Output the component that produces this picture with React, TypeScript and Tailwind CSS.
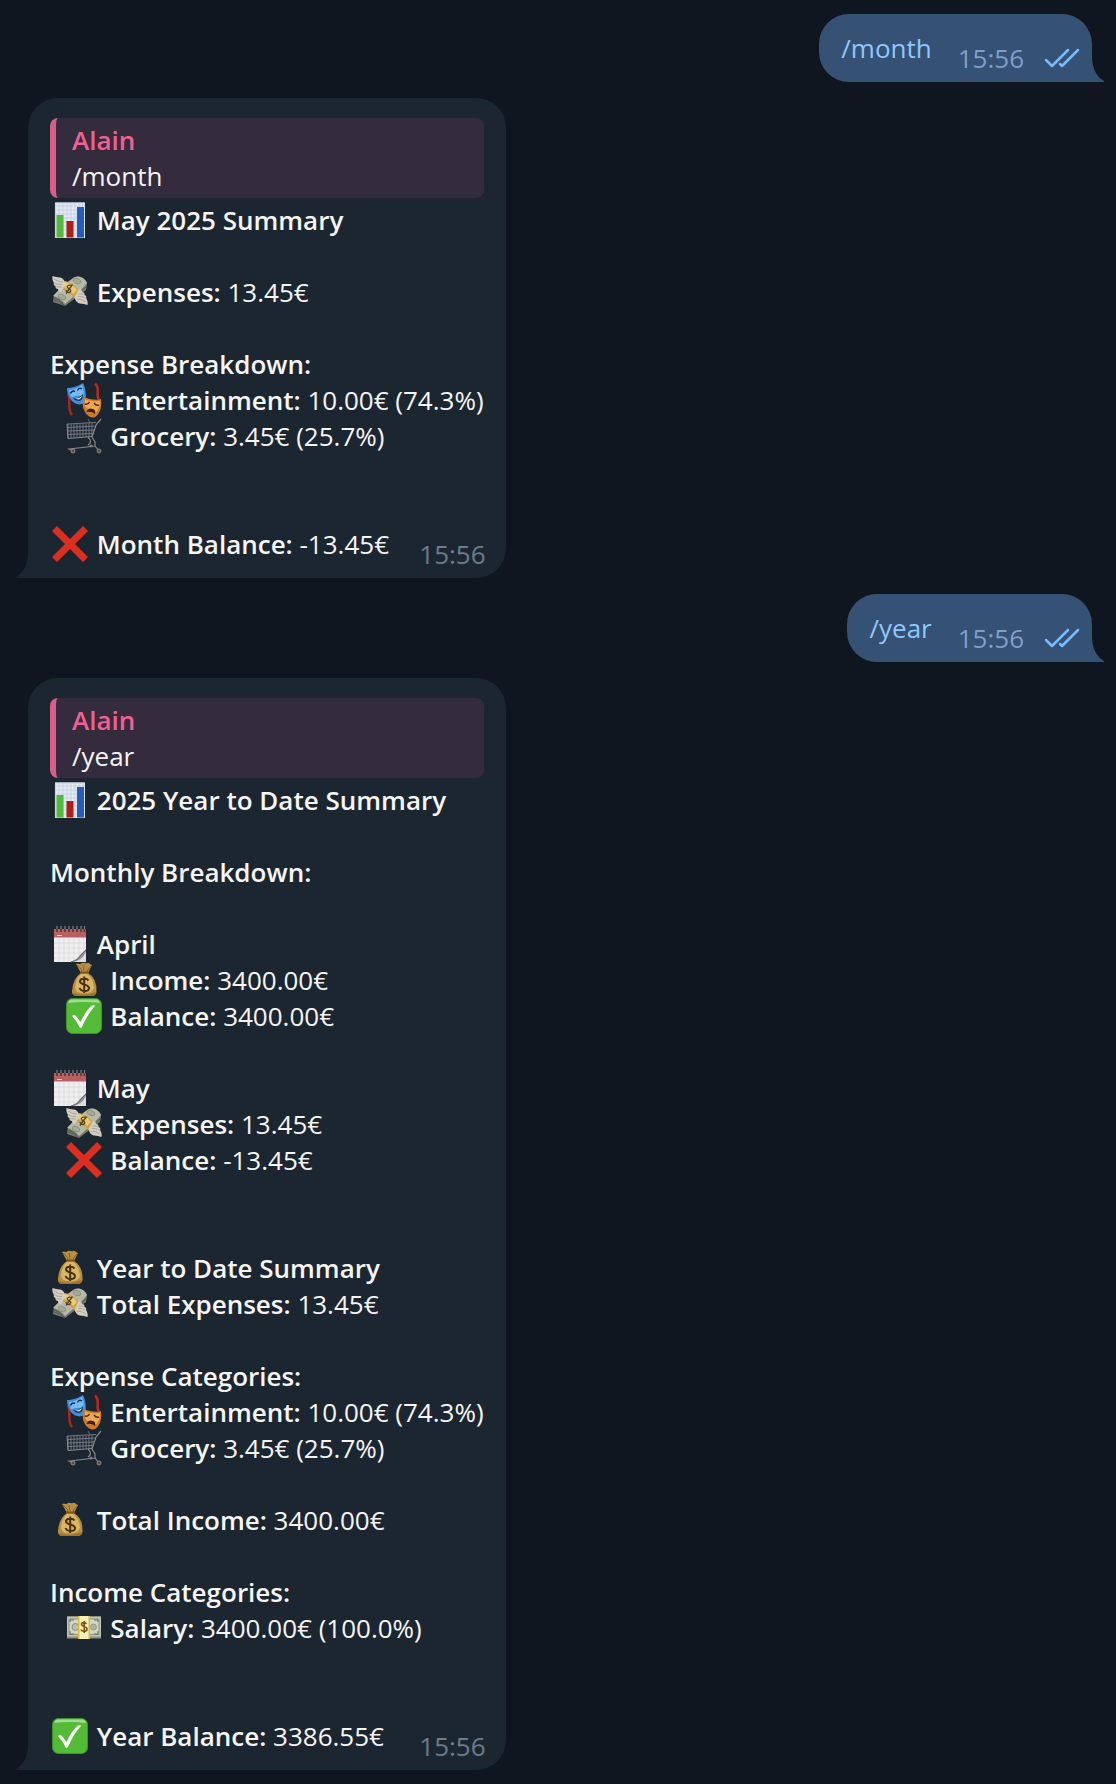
import type { ReactNode } from "react";

function Emoji({ label, children }: { label: string; children: ReactNode }) {
  return (
    <svg role="img" aria-label={label} viewBox="0 0 36 36" className="mx-0.5 inline-block h-9 w-9 overflow-visible align-top">
      {children}
    </svg>
  );
}

function Chart() {
  return (
    <Emoji label="Bar chart">
      <rect x="3" y="0.5" width="30" height="35.5" fill="#e3eaf3" />
      <path d="M7 .5V36M11 .5V36M15 .5V36M19 .5V36M23 .5V36M27 .5V36M31 .5V36M3 4H33M3 8H33M3 12H33M3 16H33M3 20H33M3 24H33M3 28H33M3 32H33" stroke="#bccbdd" strokeWidth=".7" />
      <path d="M3.4 36V.9H32.6" fill="none" stroke="#c5ccd3" strokeWidth=".8" />
      <rect x="4.5" y="13" width="7" height="22.5" fill="#55b83e" />
      <rect x="14.5" y="19" width="7" height="16.5" fill="#a92019" />
      <rect x="25" y="5" width="7" height="30.5" fill="#265bb7" />
    </Emoji>
  );
}

function Wing() {
  return (
    <>
      <path d="M.5 1C3 2 5 2 8 2.500 11 3 13 6 13.500 9L9 17C7 17 6 15.500 6 14 4 14 3 12.500 3.500 11 2 10.500 1 9 2 8 .5 6 0 3 .5 1Z" fill="#d3cec1" />
      <path d="M2 4Q6 7 11 7M2.500 8Q6 10 10 9.500M4.500 11.500Q7 12.500 9.500 12" fill="none" stroke="#a29d92" strokeWidth=".8" />
    </>
  );
}

function WingedMoney() {
  return (
    <Emoji label="Money with wings">
      <g transform="translate(0 2)">
        <path d="M11 9 22 1.500C27 -1 33 3 35 8L34 14 13 30 1 26 2 19Z" fill="#777b6c" />
        <path d="M12 9 22 1.500C27 -1 33 2 35 7L29 14 13 28C10 24 6 21 1 20Z" fill="#b7b9a8" />
        <path d="M2 22Q8 23 13 30M2 24Q8 25 12 30M22 21 34 11" fill="none" stroke="#4f5449" strokeWidth=".8" />
        <ellipse cx="25" cy="5" rx="4" ry="2.500" transform="rotate(25 25 5)" fill="#a3aa95" stroke="#7d846f" strokeWidth=".6" />
        <ellipse cx="10" cy="21" rx="4" ry="2.500" transform="rotate(25 10 21)" fill="#a3aa95" stroke="#7d846f" strokeWidth=".6" />
        <path d="M13 5C18 6 23 9 26 13V19L22 22C19 18 14 14 9 13V9Z" fill="#d3a33f" />
        <path d="M13 6C18 7 22 10 25 14L21 18C18 14 14 11 9 10Z" fill="#e6cb7c" />
        <path d="M20 10C17 8 14 10 16 12S20 14 18 16 14 15 14 14M20.500 8.500 14 17.500" fill="none" stroke="#5b431e" strokeWidth="1.300" />
        <g transform="translate(0 -1)"><Wing /></g>
        <g transform="translate(36 30) rotate(180)"><Wing /></g>
      </g>
    </Emoji>
  );
}

function Masks() {
  return (
    <Emoji label="Performing arts">
      <path d="M2 11C5 18 1 27 6 33" fill="none" stroke="#a5281c" strokeWidth="2.500" />
      <path d="M29 1.500C35 7 29 12 33 18" fill="none" stroke="#b52c1c" strokeWidth="2.500" />
      <path d="M1 6C5 6 13 4 17 1 20 7 21 17 18 21 14 24 8 22 5 18 2 14 1 10 1 6Z" fill="#3e8fdd" />
      <path d="M3 8C8 8 13 5 16 3 18 8 18 12 17 15 12 12 7 15 5 15Z" fill="#75bcf2" />
      <path d="M4.500 11.500Q6 8 9 9.500M11.500 8.500Q13 5 16 7" fill="none" stroke="#102d58" strokeWidth="1.500" />
      <path d="M7 16Q13 17 17 12 17 19 13 19 9 19 7 16Z" fill="#17365f" />
      <path d="M8.500 16.500Q13 17 16 14 15 17 13 17.500Z" fill="#e3f2fa" />
      <path d="M18 15C22 17 31 19 35 17 36 25 34 32 29 35 25 37 20 33 18 28 16 24 17 19 18 15Z" fill="#cc7a2c" />
      <path d="M19 17C23 19 30 20 34 19 34 25 32 29 29 31 24 29 21 27 19 24Z" fill="#eda950" />
      <path d="M19 22Q22 23 23.500 20M28 21Q30 24 33 23" fill="none" stroke="#54280c" strokeWidth="1.500" />
      <path d="M20.500 30Q22 25 27 27 30 28 29 32 26 29 20.500 30Z" fill="#471b11" />
    </Emoji>
  );
}

function Cart() {
  return (
    <Emoji label="Shopping cart">
      <g fill="none" stroke="#858990" strokeWidth=".8">
        <path d="M1 6 30 4.500M1.500 9.500 29 8M2 13 28 12M2 16.500 27 15.500M2 6V20M5 6V20M8 6V20M11 6V19.500M14 6V19.500M17 5.500V19M20 5.500V19M23 5V19M26 5V18" />
        <path d="M1 6 2 20.500 26 18.500" strokeWidth="1" />
      </g>
      <path d="M35 1 30 7 26 19 29 24 29 28 3 31 7 33M22 19Q27 24 22 27M29 28 33 33" fill="none" stroke="#8c858a" strokeWidth="1.200" />
      <path d="M22 1 24 5" stroke="#626a72" />
      <g fill="#4f4c4e" stroke="#a19a9b" strokeWidth=".8">
        <circle cx="7" cy="33" r="2" />
        <circle cx="33" cy="33" r="2" />
        <circle cx="25" cy="28" r="1" />
      </g>
    </Emoji>
  );
}

function Cross() {
  return (
    <Emoji label="Cross mark">
      <path d="M5 0 18 13 31 0 36 5 23 18 36 31 31 36 18 23 5 36 0 31 13 18 0 5Z" fill="#dc2f20" />
    </Emoji>
  );
}

function Check() {
  return (
    <Emoji label="Check mark">
      <rect x=".5" y=".5" width="35" height="35" rx="6" fill="#54bb37" stroke="#3d942a" />
      <path d="M5 1.500H31Q33.500 2 34 5 18 3 2 5 2.500 2 5 1.500Z" fill="#a0dc91" />
      <path d="M6 18Q8 16.500 10 18L14.500 24Q20 12 26 7.500 28 6.500 29 8 22 15 16 29 14.500 31 13.500 29 10 22 6 18Z" fill="#fff" />
    </Emoji>
  );
}

function Calendar() {
  return (
    <Emoji label="Calendar">
      <rect x="2" y="3" width="32" height="33" fill="#efefef" />
      <rect x="2" y="3" width="32" height="8.500" fill="#b8605f" />
      <path d="M7 12V36M12 12V36M17 12V36M22 12V36M27 12V36M32 12V24M2 17H34M2 22H34M2 27H34M2 32H34" stroke="#d9d9dc" strokeWidth=".8" />
      <path d="M5 9.500H10" stroke="#e7c5c5" />
      <path d="M34 23 34 36H18C24 34 26 32 27 30Q29 28 34 23Z" fill="#939496" />
      <path d="M34 26V36H20Q30 35 34 26Z" fill="#dedee0" />
      <path d="M19 36Q27 34 29 29 31 27 34 24" fill="none" stroke="#66686b" strokeWidth="1" />
      <path d="M5 0V6M9 0V6M13 0V6M17 0V6M21 0V6M25 0V6M29 0V6M32.500 0V6" stroke="#4a3b3e" strokeWidth="1.600" />
      <path d="M5 0V3M9 0V3M13 0V3M17 0V3M21 0V3M25 0V3M29 0V3M32.500 0V3" stroke="#8a8e92" strokeWidth=".8" />
    </Emoji>
  );
}

function MoneyBag() {
  return (
    <Emoji label="Money bag">
      <path d="M10 2C12 1 14 3 16 1 18 0 19 2 21 1 23 0 24 3 26 3L22 11Q31 16 30.500 30 30 34 25 34H11Q5.500 34 6 29 7 16 15 11Z" fill="#b98e42" />
      <path d="M15 12Q10 16 9 26 10 31 17 31 26 32 28 26 27 16 21 12Z" fill="#d9b764" />
      <path d="M11 3 16 8 15 11M25 4 21 9 22 11M17 3 18 9" fill="none" stroke="#8a632b" strokeWidth="1" />
      <path d="M14 10.500H23" stroke="#7d521f" strokeWidth="2" />
      <path d="M7 31Q18 35 30 30 30 34 25 34H11Q7 34 7 31Z" fill="#9b7130" />
      <path d="M22.500 18.500C21 16 14 16 14 19.500S23 22 23 26 15 30 13.500 26M18.200 14.500V31" fill="none" stroke="#49320f" strokeWidth="2" />
    </Emoji>
  );
}

function Banknote() {
  return (
    <Emoji label="Banknote">
      <rect x="1" y="6.500" width="34" height="22" fill="#8f9181" />
      <rect x="1" y="6.500" width="34" height="20" fill="#c3c4b2" />
      <rect x="3" y="9" width="30" height="15.500" fill="#d4d5c6" stroke="#85896f" strokeWidth=".8" />
      <path d="M4 12V10H8M28 10H32V12M4 21V24H8M28 24H32V21" fill="none" stroke="#666d57" />
      <circle cx="9.500" cy="17" r="3.500" fill="#bbc0aa" stroke="#7d8570" strokeWidth=".8" />
      <circle cx="27.500" cy="17" r="3" fill="#a6b89a" stroke="#7d8570" strokeWidth=".6" />
      <rect x="12" y="6" width="12" height="23" fill="#e3b93c" />
      <rect x="13.500" y="6" width="9" height="23" fill="#f9efbd" />
      <path d="M20.500 14C19.500 12 15.500 12 15.500 14.500S21 16 21 19 16 22 15 19.500M18.200 11V23" fill="none" stroke="#7a5a18" strokeWidth="1.700" />
    </Emoji>
  );
}

function Outgoing({ command }: { command: string }) {
  return (
    <article className="relative flex h-17 self-end rounded-[30px] rounded-br-none bg-[#355174] pt-4 pr-3 pl-5.5">
      <a href={"#" + command.slice(1)} className="text-[#8fc7ff]">{command}</a>
      <time className="mt-2.5 ml-6.5 text-[#7f9fc9]">15:56</time>
      <svg role="img" aria-label="Read" viewBox="0 0 36 20" className="mt-4.5 ml-5 h-5 w-9" fill="none" stroke="#78bcff" strokeWidth="2.500" strokeLinecap="round" strokeLinejoin="round">
        <path d="M2 12 8 18 24 2M16 16 18 18 34 2" />
      </svg>
      <svg aria-hidden="true" viewBox="0 0 12 26" className="absolute bottom-0 left-full h-6.5 w-3">
        <path d="M0 0Q0 18 12 25V26H0Z" fill="#355174" />
      </svg>
    </article>
  );
}

function Incoming({ command, children }: { command: string; children: ReactNode }) {
  return (
    <article className="relative self-start rounded-[30px] rounded-bl-none bg-[#1c2631] px-5.5 pt-5 pb-4 text-[#f5f5f5]">
      <blockquote className="mb-1 rounded-lg border-l-6 border-[#d75f8c] bg-[#342b3c] px-4 py-1">
        <p className="font-semibold text-[#ef6193]">Alain</p>
        <p>{command}</p>
      </blockquote>
      <div className="whitespace-pre">{children}</div>
      <time className="absolute right-5 bottom-1.5 text-[#6d7c8c]">15:56</time>
      <svg aria-hidden="true" viewBox="0 0 12 26" className="absolute right-full bottom-0 h-6.5 w-3">
        <path d="M12 0Q12 18 0 25V26H12Z" fill="#1c2631" />
      </svg>
    </article>
  );
}

function Line({ icon, title, value, indent }: { icon?: ReactNode; title: string; value?: string; indent?: boolean }) {
  return (
    <p className="h-9">
      {indent && "  "}
      {icon}
      {icon && " "}
      <strong className="font-semibold">{title}</strong>
      {value && " " + value}
    </p>
  );
}

function Gap() {
  return <div className="h-9" />;
}

export default function App() {
  return (
    <main className="flex min-h-screen flex-col gap-4 bg-[#0f161f] py-3.5 pr-6 pl-7 font-['Open_Sans','Noto_Sans',sans-serif] text-[26px] leading-9">
      <Outgoing command="/month" />
      <Incoming command="/month">
        <Line icon={<Chart />} title="May 2025 Summary" />
        <Gap />
        <Line icon={<WingedMoney />} title="Expenses:" value="13.45€" />
        <Gap />
        <Line title="Expense Breakdown:" />
        <Line indent icon={<Masks />} title="Entertainment:" value="10.00€ (74.3%)" />
        <Line indent icon={<Cart />} title="Grocery:" value="3.45€ (25.7%)" />
        <Gap />
        <Gap />
        <Line icon={<Cross />} title="Month Balance:" value="-13.45€" />
      </Incoming>
      <Outgoing command="/year" />
      <Incoming command="/year">
        <Line icon={<Chart />} title="2025 Year to Date Summary" />
        <Gap />
        <Line title="Monthly Breakdown:" />
        <Gap />
        <Line icon={<Calendar />} title="April" />
        <Line indent icon={<MoneyBag />} title="Income:" value="3400.00€" />
        <Line indent icon={<Check />} title="Balance:" value="3400.00€" />
        <Gap />
        <Line icon={<Calendar />} title="May" />
        <Line indent icon={<WingedMoney />} title="Expenses:" value="13.45€" />
        <Line indent icon={<Cross />} title="Balance:" value="-13.45€" />
        <Gap />
        <Gap />
        <Line icon={<MoneyBag />} title="Year to Date Summary" />
        <Line icon={<WingedMoney />} title="Total Expenses:" value="13.45€" />
        <Gap />
        <Line title="Expense Categories:" />
        <Line indent icon={<Masks />} title="Entertainment:" value="10.00€ (74.3%)" />
        <Line indent icon={<Cart />} title="Grocery:" value="3.45€ (25.7%)" />
        <Gap />
        <Line icon={<MoneyBag />} title="Total Income:" value="3400.00€" />
        <Gap />
        <Line title="Income Categories:" />
        <Line indent icon={<Banknote />} title="Salary:" value="3400.00€ (100.0%)" />
        <Gap />
        <Gap />
        <Line icon={<Check />} title="Year Balance:" value="3386.55€" />
      </Incoming>
    </main>
  );
}
